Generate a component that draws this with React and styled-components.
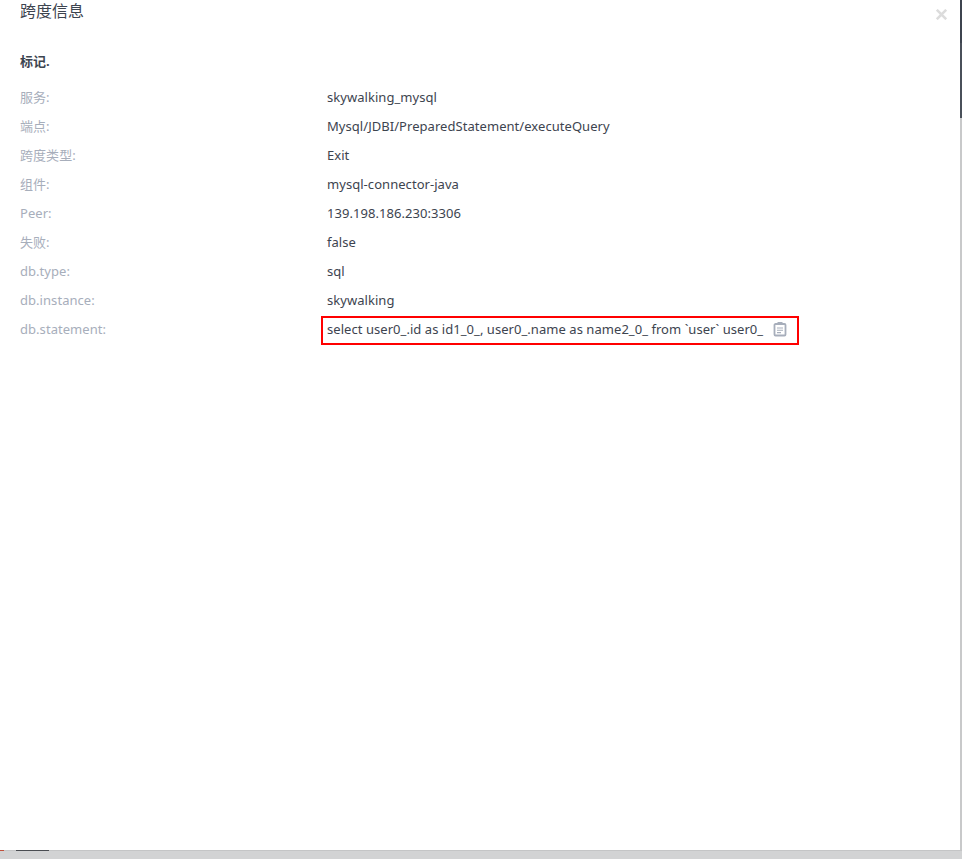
import React from "react";
import styled, { createGlobalStyle } from "styled-components";

const Global = createGlobalStyle`
  html, body { margin: 0; padding: 0; background: #d2d3d4; overflow: hidden; }
  body { font-family: "Noto Sans", "Noto Sans CJK SC", sans-serif; }
`;
const Page = styled.div`
  width: 962px; height: 859px; display: grid;
  grid-template-columns: 960px 2px; grid-template-rows: 850px 9px;
`;
const Dialog = styled.main`
  background: #fff; position: relative; padding: 0 20px; box-sizing: border-box;
`;
const Title = styled.h2`
  margin: 0; padding-top: 1px; font-size: 16px; line-height: 20px; font-weight: 400; color: #3d444f;
`;
const Close = styled.button`
  position: absolute; top: 8px; right: 13px; width: 12px; height: 12px; padding: 0; border: 0; background: none;
  color: #dcdcdc; display: flex; align-items: center; justify-content: center;
`;
const Section = styled.h5`
  margin: 0; padding-top: 30px; font-size: 13px; line-height: 20px; font-weight: 700; color: #3d444f;
`;
const List = styled.div`
  display: flex; flex-direction: column; padding-top: 11px;
`;
const Row = styled.div`
  display: flex; height: 29px; align-items: center; font-size: 13px; line-height: 20px; letter-spacing: 0.05px;
`;
const Label = styled.span`
  width: 307px; flex: none; color: #a7aebb;
`;
const Value = styled.span`
  color: #3d444f; white-space: pre;
`;
const Highlight = styled.div`
  position: relative; display: flex; align-items: center;
  &::after {
    content: ""; position: absolute; left: -6px; top: -2.5px; width: 478px; height: 29px;
    border: 2px solid #ff0000; box-sizing: border-box; pointer-events: none;
  }
`;
const CopyIcon = styled.svg`
  width: 14px; height: 16px; margin-left: 10px; flex: none; color: #a7aebb;
`;
const Scrollbar = styled.aside`
  background: linear-gradient(#3d444f 0 43px, #4a505a 43px 118px, #c8c9ca 118px);
`;
const Bottom = styled.footer`
  grid-column: 1 / 3; position: relative; border-top: 1px solid #c4c5c6; box-sizing: border-box;
`;
const Tab = styled.span`
  position: absolute; top: -1px; left: ${p => p.$left}px; width: ${p => p.$width}px; height: 1px; background: ${p => p.$color};
`;

const rows = [
  ["服务:", "skywalking_mysql"],
  ["端点:", "Mysql/JDBI/PreparedStatement/executeQuery"],
  ["跨度类型:", "Exit"],
  ["组件:", "mysql-connector-java"],
  ["Peer:", "139.198.186.230:3306"],
  ["失败:", "false"],
  ["db.type:", "sql"],
  ["db.instance:", "skywalking"],
];

export default function App() {
  return (
    <Page>
      <Global />
      <Dialog>
        <Title>跨度信息</Title>
        <Close aria-label="close">
          <svg width="11" height="11" viewBox="0 0 11 11"><path d="M.8.8l9.4 9.4M10.2.8L.8 10.2" stroke="currentColor" strokeWidth="2.6" /></svg>
        </Close>
        <Section>标记.</Section>
        <List>
          {rows.map(([k, v]) => (
            <Row key={k}><Label>{k}</Label><Value>{v}</Value></Row>
          ))}
          <Row>
            <Label>db.statement:</Label>
            <Highlight>
              <Value>select user0_.id as id1_0_, user0_.name as name2_0_ from `user` user0_</Value>
              <CopyIcon viewBox="0 0 14 16">
                <path d="M2.5 3h9a1 1 0 0 1 1 1v9.5a1 1 0 0 1-1 1h-9a1 1 0 0 1-1-1V4a1 1 0 0 1 1-1z" fill="none" stroke="currentColor" strokeWidth="1.8" />
                <path d="M4.5 1h5v3h-5z" fill="currentColor" />
                <path d="M4 7h6M4 9.3h6M4 11.6h4" stroke="currentColor" strokeWidth="1.1" />
              </CopyIcon>
            </Highlight>
          </Row>
        </List>
      </Dialog>
      <Scrollbar />
      <Bottom>
        <Tab $left={0} $width={4} $color="#c0503c" />
        <Tab $left={16} $width={33} $color="#4a4d52" />
      </Bottom>
    </Page>
  );
}
